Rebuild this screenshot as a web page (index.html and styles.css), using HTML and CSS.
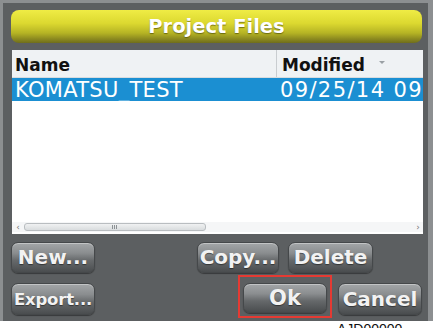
FILE: index.html
```html
<!DOCTYPE html>
<html>
<head>
<meta charset="utf-8">
<link rel="stylesheet" href="styles.css">
</head>
<body>
<div class="screen">
  <div class="title">Project Files</div>
  <div class="table">
    <div class="thead">
      <div class="col-name">Name</div>
      <div class="col-mod">Modified <span class="sort"></span></div>
    </div>
    <div class="row selected">
      <div class="col-name">KOMATSU_TEST</div>
      <div class="col-mod">09/25/14 09</div>
    </div>
    <div class="fill"></div>
    <div class="hscroll">
      <span class="arrow">&#8249;</span>
      <div class="thumb"><span class="grip"></span></div>
      <span class="arrow right">&#8250;</span>
    </div>
  </div>
  <div class="btn-row">
    <button class="btn">New...</button>
    <button class="btn copy">Copy...</button>
    <button class="btn delete">Delete</button>
  </div>
  <div class="btn-row second">
    <button class="btn export">Export...</button>
    <button class="btn ok">Ok</button>
    <button class="btn cancel">Cancel</button>
  </div>
</div>
<div class="caption">AJD00000</div>
</body>
</html>
```
FILE: styles.css
```css
html, body {
  margin: 0;
  padding: 0;
  background: #ffffff;
  width: 433px;
  height: 328px;
  overflow: hidden;
}
.screen {
  box-sizing: border-box;
  width: 433px;
  height: 321px;
  background: #5c5f61;
  border: 3px solid #8c8f91;
  border-right-width: 5px;
  border-bottom: none;
  padding: 7px 0 0 8px;
  display: flex;
  flex-direction: column;
  font-family: "DejaVu Sans", sans-serif;
}
.title {
  width: 411px;
  height: 33px;
  box-sizing: border-box;
  border-radius: 8px;
  background: linear-gradient(to bottom, #efec45 0%, #dcd930 40%, #b5b324 70%, #6f6d1c 100%);
  color: #ffffff;
  font-weight: bold;
  font-size: 19.5px;
  line-height: 33px;
  text-align: center;
  text-shadow: 0 1px 1px rgba(60, 60, 0, 0.6);
}
.table {
  margin: 7px 0 0 1px;
  width: 411px;
  height: 184px;
  background: #ffffff;
  display: flex;
  flex-direction: column;
  overflow: hidden;
}
.thead {
  display: flex;
  height: 27px;
  background: #eff2f4;
  border-bottom: 1px solid #d8dcdf;
  font-weight: bold;
  font-size: 17px;
  color: #111111;
  line-height: 30px;
}
.col-name {
  width: 261px;
  padding-left: 3px;
  white-space: nowrap;
}
.thead .col-name {
  border-right: 1px solid #c9cdd0;
}
.col-mod {
  padding-left: 5px;
  white-space: nowrap;
  position: relative;
}
.sort {
  display: inline-block;
  width: 0;
  height: 0;
  border-left: 3px solid transparent;
  border-right: 3px solid transparent;
  border-top: 3px solid #9aa0a4;
  vertical-align: middle;
  margin-left: 8px;
  margin-top: -8px;
}
.row {
  display: flex;
  height: 23px;
  line-height: 24px;
  font-size: 21px;
  letter-spacing: 0.3px;
}
.row .col-name {
  width: 262px;
}
.row .col-mod {
  letter-spacing: 1.4px;
}
.selected {
  background: #1b8fd2;
  color: #ffffff;
}
.fill {
  flex: 1;
}
.hscroll {
  height: 10px;
  margin-bottom: 2px;
  display: flex;
  align-items: center;
  background: #f5f6f7;
  font-size: 9px;
  color: #777;
}
.arrow {
  width: 12px;
  text-align: center;
  line-height: 10px;
}
.arrow.right {
  margin-left: auto;
  width: 10px;
}
.thumb {
  width: 182px;
  height: 8px;
  box-sizing: border-box;
  border: 1px solid #b9bdc0;
  border-radius: 3px;
  background: linear-gradient(to bottom, #f0f1f2, #d9dcde);
  display: flex;
  justify-content: center;
  align-items: center;
}
.grip {
  width: 6px;
  height: 4px;
  background: repeating-linear-gradient(to right, #8d9295 0 1px, transparent 1px 2px);
}
.btn-row {
  display: flex;
  margin-top: 8px;
}
.btn-row.second {
  margin-top: 10px;
}
.btn {
  width: 84px;
  height: 31px;
  padding: 0;
  box-sizing: border-box;
  border: 1px solid #45484a;
  border-radius: 7px;
  background: linear-gradient(to bottom, #a3a6a8 0%, #8a8d8f 35%, #66696b 60%, #4a4d4f 100%);
  box-shadow: inset 0 1px 0 rgba(255,255,255,0.35), 0 1px 1px rgba(0,0,0,0.4);
  color: #f2f2f2;
  font-family: "DejaVu Sans", sans-serif;
  font-weight: bold;
  font-size: 20px;
  line-height: 29px;
  text-align: center;
  text-shadow: 0 1px 1px rgba(0,0,0,0.45);
  white-space: nowrap;
  overflow: visible;
}
.copy {
  margin-left: 102px;
  width: 82px;
}
.delete {
  margin-left: 9px;
  width: 85px;
}
.second .btn {
  height: 32px;
}
.export {
  font-size: 16.5px;
  letter-spacing: -0.2px;
}
.ok {
  margin-left: 148px;
  position: relative;
  font-size: 21px;
}
.second .ok {
  height: 30px;
}
.ok::after {
  content: "";
  position: absolute;
  left: -6px;
  top: -9px;
  width: 90px;
  height: 39px;
  border: 2px solid #e53a33;
}
.cancel {
  margin-left: 11px;
}
.caption {
  padding-left: 337px;
  font-family: "Liberation Sans", sans-serif;
  font-size: 14px;
  line-height: 14px;
  color: #111;
  padding-top: 1px;
}
```
